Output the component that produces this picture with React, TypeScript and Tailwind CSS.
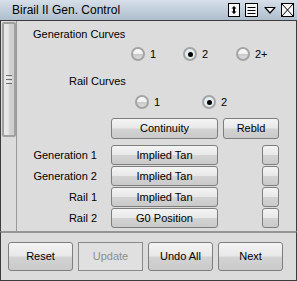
import React from "react";

const btnCls =
  "flex items-center justify-center rounded-[3px] border border-[#7e7e7e] bg-[linear-gradient(to_bottom,#f4f4f4_0%,#e8e8e8_48%,#d3d3d3_52%,#cacaca_100%)] text-black";

function Btn({ children, className = "" }: { children?: React.ReactNode; className?: string }) {
  return <div className={`${btnCls} ${className}`}>{children}</div>;
}

function Radio({ checked, label }: { checked?: boolean; label: string }) {
  return (
    <div className="flex items-center gap-[5px]">
      <div
        className={
          checked
            ? "w-[14px] h-[14px] rounded-full border-2 border-[#a4a4a4] bg-[#e2eeef] flex items-center justify-center"
            : "w-[14px] h-[14px] rounded-full border-2 border-[#a4a4a4] bg-[linear-gradient(to_bottom,#fbfbfb_0%,#f0f0f0_45%,#c9c9c9_55%,#dedede_100%)]"
        }
      >
        {checked && <div className="w-[5px] h-[5px] rounded-full bg-black" />}
      </div>
      <span className="leading-[14px]">{label}</span>
    </div>
  );
}

function Row({ label, value }: { label: string; value: string }) {
  return (
    <div className="grid grid-cols-[80px_107px_56px] gap-x-0 h-[20px]">
      <div className="flex items-center justify-end">{label}</div>
      <Btn className="ml-[14px] w-[107px] -mr-[14px]">{value}</Btn>
      <div className="flex justify-end ml-[19px] -mr-[19px]">
        <Btn className="w-[17px] h-[20px]" />
      </div>
    </div>
  );
}

export default function App() {
  return (
    <div className="w-[297px] h-[281px] bg-[#dcdcdc] flex flex-col text-[11px] text-black [font-family:'Liberation_Sans',Arial,sans-serif] overflow-hidden">
      {/* title bar */}
      <div className="h-[21px] shrink-0 flex items-center pl-[12px] pr-[3px] border-b border-[#3c3c3c] bg-[linear-gradient(to_bottom,#d6dfe9_0%,#c2cedb_50%,#afbecd_100%)]">
        <span className="text-[12px] leading-[14px]">Birail II Gen. Control</span>
        <div className="ml-auto flex items-center">
          <svg width="12" height="14" viewBox="0 0 12 14" className="mr-[5px]">
            <rect x="0.5" y="0.5" width="11" height="13" fill="#f4f6f8" stroke="#000" />
            <path d="M6 3 L8.5 5.5 H3.5 Z M6 11 L8.5 8.5 H3.5 Z" fill="#000" />
            <rect x="5" y="4" width="2" height="6" fill="#000" />
          </svg>
          <svg width="13" height="14" viewBox="0 0 13 14" className="mr-[6px]">
            <rect x="0.5" y="0.5" width="12" height="13" fill="#f4f6f8" stroke="#000" />
            <path d="M2.5 4.5 H10.5 M2.5 7.5 H10.5 M2.5 10.5 H10.5" stroke="#000" />
          </svg>
          <svg width="12" height="14" viewBox="0 0 12 14" className="mr-[5px]">
            <path d="M1 4.5 H11 L6 10 Z" fill="#f4f6f8" stroke="#000" strokeWidth="1.2" strokeLinejoin="round" />
          </svg>
          <svg width="13" height="14" viewBox="0 0 13 14">
            <rect x="0.5" y="0.5" width="12" height="13" fill="#f4f6f8" stroke="#000" />
            <path d="M1 1 L12 13 M12 1 L1 13" stroke="#000" />
          </svg>
        </div>
      </div>

      {/* body */}
      <div className="h-[210px] shrink-0 flex border-l border-r border-[#3c3c3c]">
        {/* left strip */}
        <div className="w-[16px] shrink-0 border-r border-[#9a9a9a] pl-[1px] pt-[1px]">
          <div className="w-[14px] h-[115px] rounded-[2px] border-2 border-[#a0a0a0] bg-[linear-gradient(to_right,#e6e6e6_0%,#e6e6e6_40%,#cfcfcf_60%,#cfcfcf_100%)] flex flex-col items-center justify-center gap-[1px]">
            <div className="w-[6px] h-[1px] bg-[#707070]" />
            <div className="w-[6px] h-[1px] bg-[#f0f0f0]" />
            <div className="w-[6px] h-[1px] bg-[#707070]" />
            <div className="w-[6px] h-[1px] bg-[#f0f0f0]" />
            <div className="w-[6px] h-[1px] bg-[#707070]" />
          </div>
        </div>

        {/* main */}
        <div className="flex-1 flex flex-col">
          <div className="mt-[6px] ml-[16px] leading-[14px]">Generation Curves</div>
          <div className="mt-[6px] ml-[114px] flex">
            <div className="w-[52px]"><Radio label="1" /></div>
            <div className="w-[53px]"><Radio checked label="2" /></div>
            <div><Radio label="2+" /></div>
          </div>
          <div className="mt-[13px] ml-[52px] leading-[14px]">Rail Curves</div>
          <div className="mt-[7px] ml-[118px] flex">
            <div className="w-[67px]"><Radio label="1" /></div>
            <div><Radio checked label="2" /></div>
          </div>
          <div className="mt-[9px] ml-[94px] flex gap-[5px] h-[21px]">
            <Btn className="w-[107px]">Continuity</Btn>
            <Btn className="w-[56px]">Rebld</Btn>
          </div>
          <div className="mt-[6px] flex flex-col gap-[1px]">
            <Row label="Generation 1" value="Implied Tan" />
            <Row label="Generation 2" value="Implied Tan" />
            <Row label="Rail 1" value="Implied Tan" />
            <Row label="Rail 2" value="G0 Position" />
          </div>
        </div>
      </div>

      {/* bottom */}
      <div className="flex-1 border-t-2 border-[#959595] border-l border-r border-b border-x-[#3c3c3c] border-b-[#3c3c3c] flex pt-[9px] pl-[7px] gap-[5px]">
        <Btn className="w-[65px] h-[29px]">Reset</Btn>
        <div className="w-[65px] h-[29px] flex items-center justify-center border border-[#8a8a8a] bg-[#e0e0e0] text-[#8e8e8e]">Update</div>
        <Btn className="w-[65px] h-[29px]">Undo All</Btn>
        <Btn className="w-[65px] h-[29px]">Next</Btn>
      </div>
    </div>
  );
}
